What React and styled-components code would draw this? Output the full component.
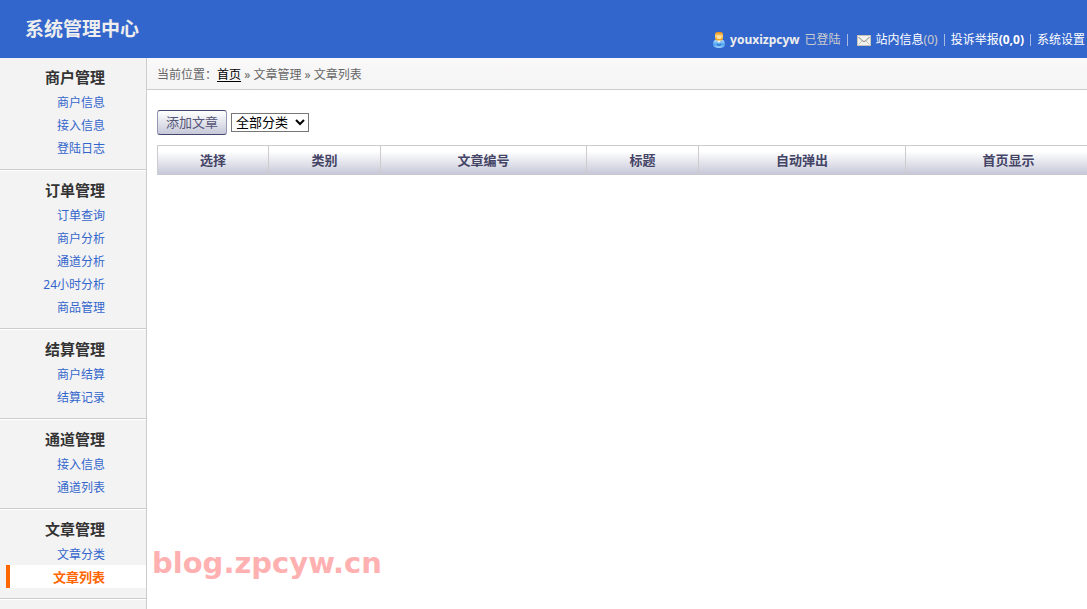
import React from 'react';
import styled, { createGlobalStyle } from 'styled-components';

const menus = [
  { title: '商户管理', items: ['商户信息', '接入信息', '登陆日志'] },
  { title: '订单管理', items: ['订单查询', '商户分析', '通道分析', '24小时分析', '商品管理'] },
  { title: '结算管理', items: ['商户结算', '结算记录'] },
  { title: '通道管理', items: ['接入信息', '通道列表'] },
  { title: '文章管理', items: ['文章分类', '文章列表'] },
];

const columns = [
  { name: '选择', width: 111 },
  { name: '类别', width: 112 },
  { name: '文章编号', width: 206 },
  { name: '标题', width: 112 },
  { name: '自动弹出', width: 207 },
  { name: '首页显示', width: 206 },
];

const App = () => {
  return (
    <Page>
      <GlobalStyle />
      <Header>
        <Title>系统管理中心</Title>
        <UserBar>
          <UserIcon />
          <strong>youxizpcyw</strong>
          <Muted>已登陆</Muted>
          <Divider />
          <MailIcon />
          <span>
            <a href="#message">站内信息</a>
            <Muted>(0)</Muted>
          </span>
          <Divider />
          <a href="#report">
            投诉举报<b>(0,0)</b>
          </a>
          <Divider />
          <a href="#setting">系统设置</a>
        </UserBar>
      </Header>
      <Body>
        <Sidebar>
          {menus.map((menu) => (
            <Group key={menu.title}>
              <GroupTitle>{menu.title}</GroupTitle>
              <ul>
                {menu.items.map((item) => (
                  <li key={item}>
                    <MenuLink href="#menu" $active={item === '文章列表'}>
                      {item}
                    </MenuLink>
                  </li>
                ))}
              </ul>
            </Group>
          ))}
          <SidebarEnd />
        </Sidebar>
        <Main>
          <Breadcrumb>
            当前位置：<a href="#home">首页</a> » 文章管理 » 文章列表
          </Breadcrumb>
          <Content>
            <Toolbar>
              <AddBtn type="button">添加文章</AddBtn>
              <Category aria-label="分类">
                <option>全部分类</option>
              </Category>
            </Toolbar>
            <Table>
              <colgroup>
                {columns.map((col) => (
                  <col key={col.name} width={col.width} />
                ))}
              </colgroup>
              <thead>
                <tr>
                  {columns.map((col) => (
                    <Th key={col.name}>{col.name}</Th>
                  ))}
                </tr>
              </thead>
            </Table>
          </Content>
          <Watermark>blog.zpcyw.cn</Watermark>
        </Main>
      </Body>
    </Page>
  );
};

export default App;

const UserIcon = () => (
  <svg width="12" height="16" viewBox="0 0 12 16" aria-hidden="true">
    <defs>
      <linearGradient id="hair" x1="0" y1="0" x2="0" y2="1">
        <stop offset="0" stopColor="#e88a10" />
        <stop offset="0.5" stopColor="#ffd67a" />
        <stop offset="1" stopColor="#e8950c" />
      </linearGradient>
      <linearGradient id="coat" x1="0" y1="0" x2="0" y2="1">
        <stop offset="0" stopColor="#b9e2ff" />
        <stop offset="0.6" stopColor="#4ea2ee" />
        <stop offset="1" stopColor="#a5d8ff" />
      </linearGradient>
    </defs>
    <path d="M1 8.5Q0 10 0 13Q1 16 6 16Q11 16 12 13Q12 10 11 8.5L8 7.5H4Z" fill="url(#coat)" />
    <path d="M4 8L6 11L8 8Z" fill="#fff" />
    <path d="M4 12.5Q6 14 8 12.5" fill="none" stroke="#1c62c4" />
    <rect x="2" y="0" width="8" height="8.5" rx="2.5" fill="url(#hair)" />
    <rect x="4" y="3" width="4" height="4" rx="1" fill="#ffe0a0" />
  </svg>
);

const MailIcon = () => (
  <Mail width="14" height="11" viewBox="0 0 14 11" aria-hidden="true">
    <rect x="0.5" y="0.5" width="13" height="10" fill="#f1f1ee" stroke="#c9c4b8" />
    <path d="M1.5 2L5.5 6Q7 7 8.5 6L12.5 2" fill="none" stroke="#85837b" />
    <path d="M1.5 9.5L5 6M12.5 9.5L9 6" fill="none" stroke="#c8c6c0" />
  </Mail>
);

const GlobalStyle = createGlobalStyle`
  * {
    box-sizing: border-box;
  }
  body {
    margin: 0;
    background: #fff;
    font-family: 'Noto Sans', 'Noto Sans CJK SC', sans-serif;
    font-size: 12px;
    color: #666;
  }
  ul {
    list-style: none;
    margin: 0;
    padding: 0;
  }
`;

const Page = styled.div`
  display: flex;
  flex-direction: column;
  min-height: 100vh;
`;

const Header = styled.header`
  display: flex;
  justify-content: space-between;
  height: 58px;
  padding: 0 2px 0 25px;
  background: #3366cc;
`;

const Title = styled.h1`
  margin: 0;
  font-size: 19px;
  line-height: 58px;
  color: #eee;
`;

const UserBar = styled.div`
  display: flex;
  align-items: center;
  gap: 5px;
  height: 20px;
  margin-top: 30px;
  line-height: 20px;
  white-space: nowrap;
  color: #eee;
  a {
    color: #fff;
    text-decoration: none;
  }
`;

const Muted = styled.span`
  color: #ccc;
`;

const Divider = styled.span`
  width: 1px;
  height: 12px;
  margin: 0 1px;
  background: #a9bbe0;
`;

const Mail = styled.svg`
  margin-left: 3px;
`;

const Body = styled.div`
  display: flex;
  flex: 1;
`;

const Sidebar = styled.nav`
  flex: none;
  width: 147px;
  border-right: 1px solid #ccc;
  background: #f3f3f3;
`;

const Group = styled.section`
  padding: 6px 0 10px;
  border-top: 1px solid #fff;
  border-bottom: 1px solid #ccc;
  text-align: right;
  &:first-child {
    border-top: none;
  }
`;

const SidebarEnd = styled.div`
  border-top: 1px solid #fff;
`;

const GroupTitle = styled.h2`
  margin: 0;
  padding-right: 41px;
  font-size: 15px;
  line-height: 26px;
  color: #333;
`;

const MenuLink = styled.a`
  display: block;
  height: 23px;
  margin-left: 6px;
  padding-right: 41px;
  border-left: 4px solid ${(props) => (props.$active ? '#ff6600' : 'transparent')};
  background: ${(props) => (props.$active ? '#fff' : 'none')};
  font-size: ${(props) => (props.$active ? '13px' : '12px')};
  font-weight: ${(props) => (props.$active ? 'bold' : 'normal')};
  line-height: 25px;
  text-decoration: none;
  color: ${(props) => (props.$active ? '#ff6600' : '#3366cc')};
`;

const Main = styled.main`
  position: relative;
  flex: 1;
  min-width: 0;
  overflow: hidden;
`;

const Breadcrumb = styled.div`
  height: 32px;
  padding-left: 10px;
  border-bottom: 1px solid #ccc;
  background: linear-gradient(#faf8f9, #f5f5f5);
  line-height: 34px;
  a {
    color: #000;
    text-underline-offset: 2px;
  }
`;

const Content = styled.div`
  padding: 20px 0 0 10px;
`;

const Toolbar = styled.div`
  display: flex;
  align-items: center;
  gap: 4px;
  margin-bottom: 10px;
`;

const AddBtn = styled.button`
  height: 25px;
  padding: 0 8px;
  border: 1px solid #9498b8;
  border-top-color: #44486c;
  border-bottom-color: #44486c;
  border-radius: 3px;
  background: linear-gradient(#fff, #c6c8d8);
  font-family: inherit;
  font-size: 13px;
  line-height: 23px;
  color: #555577;
`;

const Category = styled.select`
  width: 78px;
  height: 19px;
  padding: 0;
  border: 1px solid #767676;
  background: #fff;
  font-family: 'Liberation Sans', 'Noto Sans CJK SC', sans-serif;
  font-size: 13px;
  color: #000;
`;

const Table = styled.table`
  width: 954px;
  table-layout: fixed;
  border-collapse: separate;
  border-spacing: 0;
  border-left: 1px solid #ccc;
`;

const Th = styled.th`
  height: 30px;
  padding: 0;
  border-top: 1px solid #ccc;
  border-right: 1px solid #ccc;
  border-bottom: 1px solid #c8c9d2;
  background: linear-gradient(#fff 20%, #c6c8d8);
  font-size: 13px;
  line-height: 28px;
  color: #444466;
`;

const Watermark = styled.div`
  position: absolute;
  left: 5px;
  top: 487px;
  font-family: 'DejaVu Sans', sans-serif;
  font-size: 29px;
  font-weight: bold;
  line-height: 36px;
  color: #ffb0b0;
`;
